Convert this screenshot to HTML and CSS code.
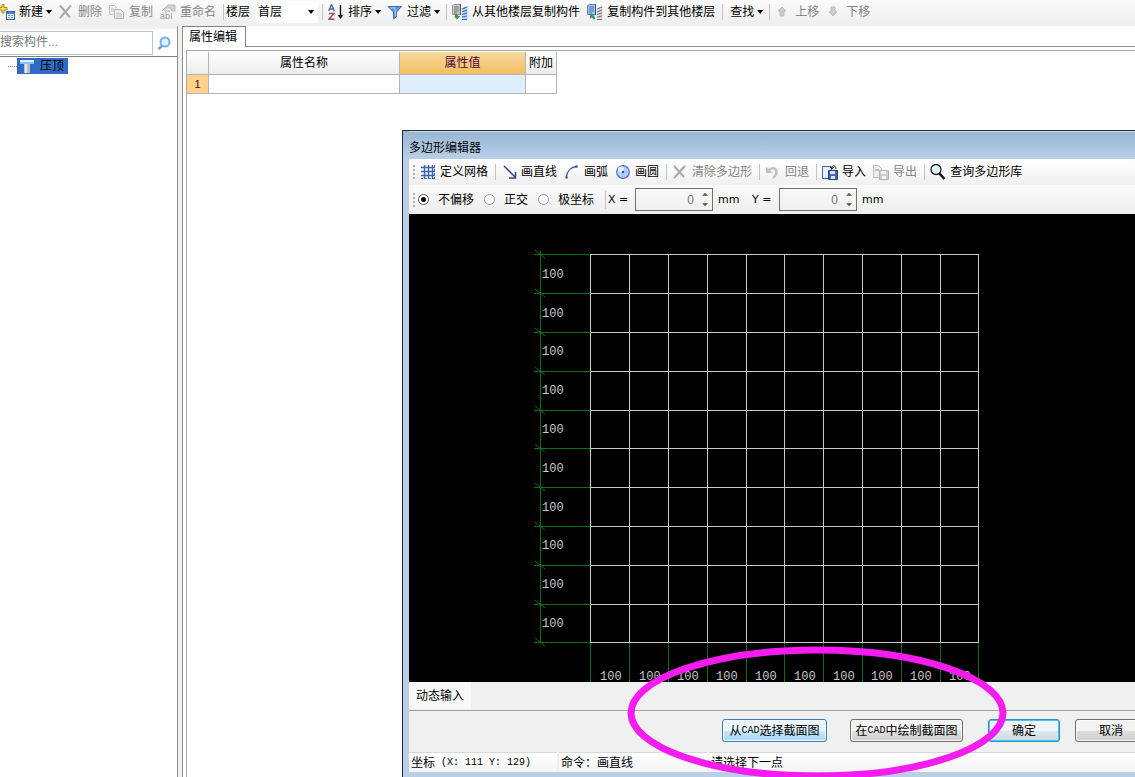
FILE: index.html
```html
<!DOCTYPE html>
<html lang="zh-CN">
<head>
<meta charset="utf-8">
<title>多边形编辑器</title>
<link rel="stylesheet" href="styles.css">
</head>
<body>
<div class="app">
  <header class="toolbar main-toolbar">
    <button class="tool new"><svg class="icon" viewBox="0 0 16 16"><rect x="7.500" y="7.500" width="8" height="8" fill="#e8f1fb" stroke="#3a62a8"/><path d="M8 8h7v2H8z" fill="#4f82cc"/><path d="M9 11.500h2m1 0h2m-5 2h2m1 0h2" stroke="#7b9ccc"/><path d="M3 .5h2v3h3v2.500H5v3H3v-3H0V3.500h3z" fill="#f8e04c" stroke="#a58b1c"/></svg>新建<i class="caret"></i></button>
    <button class="tool off"><svg class="icon" viewBox="0 0 16 16"><path d="M2 1.500l10 12M13 1.500L2 14" stroke="#aaa" stroke-width="2" fill="none"/></svg>删除</button>
    <button class="tool off"><svg class="icon" viewBox="0 0 16 16"><path d="M.5 1.500h5l3 3v6h-8z" fill="#f0f0f0" stroke="#c4c4c4"/><path d="M5.500 5.500h6l3 3v6h-9z" fill="#eee" stroke="#b4b4b4"/><path d="M7 9h5m-5 2h6m-6 2h6M2 5h3M2 7h3" stroke="#c4c4c4"/></svg>复制</button>
    <button class="tool off"><svg class="icon" viewBox="0 0 16 16"><path d="M5 4l3-3h7v6h-4V4z" fill="#d0d0d0" stroke="#bbb"/><path d="M2 7l3-3v3h5" stroke="#b0b0b0" fill="none"/><text x="0" y="15" class="rename-mark">abI</text></svg>重命名</button>
    <span class="sep"></span>
    <label class="floor-label" for="floor">楼层</label>
    <span class="select-wrap"><select id="floor"><option>首层</option></select><i class="caret"></i></span>
    <span class="sep"></span>
    <button class="tool"><svg class="icon" viewBox="0 0 16 16"><path d="M0.700 7L3.500 0.500 6.300 7M1.700 5h3.600" stroke="#4464b4" stroke-width="1.300" fill="none"/><path d="M1 9.500h5L1 15.200h5.500" stroke="#b34b52" stroke-width="1.400" fill="none"/><path d="M12.500 1v12" stroke="#111" stroke-width="1.400"/><path d="M9.800 11h5.400l-2.700 4z" fill="#111"/></svg>排序<i class="caret"></i></button>
    <button class="tool"><svg class="icon" viewBox="0 0 16 16"><path d="M1 2.500h13.500L9.500 8v4.500L6.500 15V8z" fill="#5c8fe0" stroke="#3d68b8"/><path d="M3.500 3.800h4.500l.5 4.200v4" stroke="#a4c6fa" stroke-width="1.300" fill="none"/></svg>过滤<i class="caret"></i></button>
    <span class="sep"></span>
    <button class="tool"><svg class="icon" viewBox="0 0 16 16"><path d="M.5 1.500l2-1h6v10h-8z" fill="#c8c8c8" stroke="#999"/><path d="M8.500 0v11" stroke="#555"/><path d="M2 3h5M2 5h5M2 7h5M2 9h3" stroke="#777"/><path d="M10.500 4l5-2v13h-5z" fill="#b4d0f4"/><path d="M10 5l5-2M10 8l5-2M10 10.500l5-1.500M10 13l5-1M10 15.500h5" stroke="#3f6cb4" stroke-width="1.200"/><path d="M3 10h3v2h2.500L5 15.500 2 12.500h1z" fill="#3a9b50"/></svg>从其他楼层复制构件</button>
    <button class="tool"><svg class="icon" viewBox="0 0 16 16"><path d="M.5 1.500l2-1h6v10h-8z" fill="#a8c6f0" stroke="#5880c0"/><path d="M8.500 0v11" stroke="#28508c"/><path d="M2 3h5M2 5h5M2 7h5M2 9h3" stroke="#4a70b0"/><path d="M10.500 4l5-2v13h-5z" fill="#ddd"/><path d="M10 5l5-2M10 8l5-2M10 10.500l5-1.500M10 13l5-1M10 15.500h5" stroke="#777" stroke-width="1.200"/><path d="M3 10h5l-1.500 1.500L8.500 14 7 15.500l-2.500-2L3 15z" fill="#3a9b50"/></svg>复制构件到其他楼层</button>
    <span class="sep find-sep"></span>
    <button class="tool">查找<i class="caret"></i></button>
    <span class="sep"></span>
    <button class="tool off"><svg class="icon" viewBox="0 0 16 16"><path d="M7 3l4 4H9v5H5V7H3z" fill="#ccc" stroke="#bbb"/></svg>上移</button>
    <button class="tool off"><svg class="icon" viewBox="0 0 16 16"><path d="M5 3h4v5h2l-4 4-4-4h2z" fill="#ccc" stroke="#bbb"/></svg>下移</button>
  </header>

  <div class="workspace">
    <aside class="side">
      <div class="search">
        <input type="text" placeholder="搜索构件..." aria-label="搜索构件">
        <button class="search-btn" aria-label="搜索"><svg class="icon" viewBox="0 0 16 16"><path d="M5.500 10.500L1.500 14" stroke="#6ea4dc" stroke-width="2.600"/><circle cx="8" cy="7" r="4.500" fill="#e4f4ff" stroke="#74b0ea" stroke-width="2"/></svg></button>
      </div>
      <div class="tree">
        <span class="branch"></span>
        <button class="node"><svg class="icon" viewBox="0 0 16 16"><path d="M0 2h14v4H0z" fill="#8cc0f2"/><path d="M0 2h14v2H0z" fill="#dceeff"/><path d="M4 6h6v9H4z" fill="#b9bcc0"/><path d="M5 6h2v9H5z" fill="#e8e8e8"/></svg>压顶</button>
      </div>
    </aside>
    <main class="content">
      <div class="tabs"><button class="tab">属性编辑</button></div>
      <div class="sheet">
        <table>
          <colgroup><col class="c-num"><col class="c-name"><col class="c-value"><col class="c-extra"></colgroup>
          <thead><tr><th></th><th>属性名称</th><th class="active">属性值</th><th>附加</th></tr></thead>
          <tbody><tr><td class="row-no">1</td><td></td><td class="selected"></td><td></td></tr></tbody>
        </table>
      </div>
    </main>
  </div>

  <section class="dialog" role="dialog" aria-labelledby="dlg-title">
    <h1 class="dialog-title" id="dlg-title">多边形编辑器</h1>
    <div class="dialog-body">
      <div class="toolbar dialog-toolbar">
        <span class="grip"></span>
        <button class="tool"><svg class="icon" viewBox="0 0 16 16"><path d="M4.500 1v14M8.500 1v14M12.500 1v14M1 3.500h14M1 7.500h14M1 11.500h14" stroke="#3c62b0" stroke-width="1.400"/><path d="M14.500 1v14M1 14.500h14" stroke="#3c62b0" stroke-dasharray="2 2"/></svg>定义网格</button>
        <span class="sep"></span>
        <button class="tool"><svg class="icon" viewBox="0 0 16 16"><path d="M3 2l11 11M14.500 8v6H8" stroke="#2e4a82" stroke-width="1.500" fill="none"/></svg>画直线</button>
        <button class="tool"><svg class="icon" viewBox="0 0 16 16"><path d="M2.500 13C3 7 7 3 12.500 2.500" stroke="#3c5aa0" stroke-width="1.300" fill="none"/><circle cx="2.500" cy="13.500" r="1.300" fill="#3c5aa0"/><circle cx="12.500" cy="2.500" r="1.300" fill="#3c5aa0"/></svg>画弧</button>
        <button class="tool"><svg class="icon" viewBox="0 0 16 16"><circle cx="8" cy="8" r="6.300" fill="#b0ccf8" stroke="#5070c8" stroke-width="1.200"/><circle cx="6" cy="5.500" r="3" fill="#e2eeff"/><circle cx="8" cy="8" r="1.200" fill="#2e4aa0"/></svg>画圆</button>
        <span class="sep"></span>
        <button class="tool off"><svg class="icon" viewBox="0 0 16 16"><path d="M2 2l10 11M13 2L2 14" stroke="#aaa" stroke-width="2" fill="none"/></svg>清除多边形</button>
        <span class="sep"></span>
        <button class="tool off"><svg class="icon" viewBox="0 0 16 16"><path d="M4 6c6-5 11 2 4 8" stroke="#c0c0c0" stroke-width="2.400" fill="none"/><path d="M1 3v6h7z" fill="#c0c0c0"/></svg>回退</button>
        <span class="sep"></span>
        <button class="tool"><svg class="icon" viewBox="0 0 16 16"><path d="M.5 2.500h9v12h-9z" fill="#e9f0fb" stroke="#4462a8"/><path d="M6.500 6.500h9v9h-9z" fill="#4a64b8" stroke="#283c80"/><path d="M8 7h5v3H8zM9 12h4v3H9z" fill="#dce4f8"/><path d="M14 5c0-4-4-4-4-1m-2-1l2 2 2-2" stroke="#222" fill="none"/></svg>导入</button>
        <button class="tool off"><svg class="icon" viewBox="0 0 16 16"><path d="M.5 1.500h5l3 3v9h-8z" fill="#eee" stroke="#bbb"/><path d="M6.500 6.500h9v9h-9z" fill="#ccc" stroke="#b0b0b0"/><path d="M8 7h5v3H8zM9 12h4v3H9z" fill="#f2f2f2"/><path d="M2 5h4v2H2z" fill="#bbb"/></svg>导出</button>
        <span class="sep"></span>
        <button class="tool"><svg class="icon" viewBox="0 0 16 16"><circle cx="6" cy="5.500" r="5" fill="#d8f0fa" stroke="#222" stroke-width="1.300"/><path d="M9.500 9.500l5 5.500" stroke="#111" stroke-width="2.600"/><path d="M3 6c0-2 1-3 3-3" stroke="#fff" stroke-width="1.500" fill="none"/></svg>查询多边形库</button>
      </div>

      <div class="options">
        <span class="grip"></span>
        <div class="modes">
          <label><input type="radio" name="mode" checked>不偏移</label>
          <label><input type="radio" name="mode">正交</label>
          <label><input type="radio" name="mode">极坐标</label>
        </div>
        <span class="sep"></span>
        <label class="axis" for="off-x">X =</label>
        <span class="spin"><input id="off-x" type="text" value="0"><span class="steps"><button aria-label="X 增加"><i class="up"></i></button><button aria-label="X 减少"><i class="down"></i></button></span></span>
        <span class="unit">mm</span>
        <label class="axis" for="off-y">Y =</label>
        <span class="spin"><input id="off-y" type="text" value="0"><span class="steps"><button aria-label="Y 增加"><i class="up"></i></button><button aria-label="Y 减少"><i class="down"></i></button></span></span>
        <span class="unit">mm</span>
      </div>

      <div class="canvas">
        <svg class="drawing" width="100%" height="100%">
          <g class="dim">
            <path d="M131.500 37V429M125 40.500H181M125 79.500H181M125 118.500H181M125 157.500H181M125 196.500H181M125 234.500H181M125 273.500H181M125 312.500H181M125 351.500H181M125 390.500H181M125 428.500H181"/>
            <path d="M181.500 429V468M220.500 429V468M259.500 429V468M298.500 429V468M337.500 429V468M375.500 429V468M414.500 429V468M453.500 429V468M492.500 429V468M531.500 429V468M569.500 429V468"/>
            <path class="ticks" d="M126 36l10 8M126 75l10 8M126 114l10 8M126 153l10 8M126 192l10 8M126 230l10 8M126 269l10 8M126 308l10 8M126 347l10 8M126 386l10 8M126 424l10 8"/>
          </g>
          <path class="grid" d="M181 40.500H570M181 79.500H570M181 118.500H570M181 157.500H570M181 196.500H570M181 234.500H570M181 273.500H570M181 312.500H570M181 351.500H570M181 390.500H570M181 428.500H570M181.500 40V429M220.500 40V429M259.500 40V429M298.500 40V429M337.500 40V429M375.500 40V429M414.500 40V429M453.500 40V429M492.500 40V429M531.500 40V429M569.500 40V429"/>
          <g class="nums">
            <text x="133" y="64">100</text><text x="133" y="103">100</text><text x="133" y="141">100</text><text x="133" y="180">100</text><text x="133" y="219">100</text><text x="133" y="258">100</text><text x="133" y="297">100</text><text x="133" y="335">100</text><text x="133" y="374">100</text><text x="133" y="413">100</text>
            <text x="191" y="466">100</text><text x="230" y="466">100</text><text x="268" y="466">100</text><text x="307" y="466">100</text><text x="346" y="466">100</text><text x="385" y="466">100</text><text x="424" y="466">100</text><text x="462" y="466">100</text><text x="501" y="466">100</text><text x="540" y="466">100</text>
          </g>
        </svg>
      </div>

      <div class="dynamic"><button class="dyn-btn">动态输入</button></div>
      <div class="actions">
        <button class="btn hot">从<span class="narrow">CAD</span>选择截面图</button>
        <button class="btn draw">在<span class="narrow">CAD</span>中绘制截面图</button>
        <button class="btn ok">确定</button>
        <button class="btn cancel">取消</button>
      </div>
      <footer class="status">
        <span class="cell">坐标<span class="narrow coords"> (X: 111 Y: 129)</span></span>
        <span class="cell">命令：画直线</span>
        <span class="cell last">请选择下一点</span>
      </footer>
    </div>
  </section>

  <svg class="highlight" viewBox="0 0 380 134"><ellipse cx="190" cy="67" rx="186" ry="63"/></svg>
</div>
</body>
</html>
```
FILE: styles.css
```css
* { box-sizing: border-box; }
body {
  margin: 0;
  overflow: hidden;
  color: #000;
  background: #fff;
  font: 12px/16px "Liberation Sans", "Noto Sans CJK SC", sans-serif;
}
button, input, select { font: inherit; color: inherit; margin: 0; padding: 0; border: 0; background: none; border-radius: 0; }
.app { position: relative; display: flex; flex-direction: column; height: 100vh; overflow: hidden; }
.icon { width: 16px; height: 16px; flex: none; display: block; }

.toolbar { display: flex; align-items: center; white-space: nowrap; flex: none; height: 26px; }
.main-toolbar { background: linear-gradient(#fbfbfb, #eee); padding-bottom: 2px; }
.tool { display: flex; align-items: center; gap: 4px; margin-right: 7px; flex: none; }
.tool.new { margin-left: -1px; }
.tool.off { color: #858585; }
.rename-mark { font: 9px "Liberation Sans", sans-serif; fill: #999; }
.caret { width: 6px; height: 4px; flex: none; background: #000; clip-path: polygon(0 0, 100% 0, 50% 100%); }
.tool .caret { margin: 0 -1px; }
.sep { width: 1px; height: 16px; background: #c3c3c3; margin-right: 5px; flex: none; }
.find-sep { margin-right: 7px; }
.floor-label { margin-left: -3px; margin-right: 6px; }
.select-wrap { display: flex; align-items: center; background: #fff; width: 62px; height: 22px; margin-right: 4px; padding-right: 4px; flex: none; }
.select-wrap select { appearance: none; flex: 1; min-width: 0; padding-left: 2px; }

.workspace { display: flex; flex: 1; min-height: 0; background: #f0f0f0; }
.side { width: 178px; flex: none; display: flex; flex-direction: column; border-right: 1px solid #909090; padding-top: 3px; }
.search { display: flex; align-items: center; height: 28px; background: #fff; border-bottom: 1px solid #808080; flex: none; }
.search input { width: 153px; height: 24px; padding-bottom: 2px; border: 1px solid #b5c3d3; border-left: 0; }
.search input::placeholder { color: #777; opacity: 1; }
.search-btn { margin-left: 4px; }
.tree { flex: 1; display: flex; align-items: flex-start; background: #fff; padding: 1px 0 0 8px; }
.branch { width: 9px; margin-top: 8px; border-top: 1px dotted #888; }
.node { display: flex; align-items: center; gap: 4px; height: 16px; padding: 0 4px 0 3px; background: #316ac5; }
.content { flex: 1; min-width: 0; margin-left: 4px; border-left: 1px solid #909090; background: #fff; display: flex; flex-direction: column; }
.tabs { display: flex; height: 21px; flex: none; }
.tabs::after { content: ""; flex: 1; border-bottom: 1px solid #909090; }
.tab { width: 63px; padding-right: 2px; border: solid #808080; border-width: 1px 1px 0 0; }
.sheet { margin: 3px 0 0 3px; border: solid #a8a8a8; border-width: 1px 0 0 1px; flex: 1; padding-top: 1px; }
table { border-collapse: separate; border-spacing: 0; table-layout: fixed; width: 370px; }
.c-num { width: 22px; }
.c-name { width: 191px; }
.c-value { width: 126px; }
.c-extra { width: 31px; }
th, td { padding: 0; border: solid #b4b4b4; border-width: 0 1px 1px 0; text-align: center; font-weight: normal; }
th { height: 23px; background: linear-gradient(#fff, #ededed); }
td { height: 19px; }
th.active { background: linear-gradient(#f7d9a0, #f2bf60); color: #500030; }
.row-no { background: #ffd28c; color: #500030; font-size: 11px; }
.selected { background: #dfeefd; }

.dialog { position: absolute; left: 402px; top: 130px; right: 0; bottom: 0; display: flex; flex-direction: column; padding: 0 0 5px 6px; border: solid #222c38; border-width: 1px 0 0 1px; background: linear-gradient(#98b5d3, #b9cfe8 28px); }
.dialog-title { margin: 0; height: 28px; font-size: 12px; font-weight: normal; line-height: 32px; border-top: 1px solid #c8dcf0; flex: none; }
.dialog-body { flex: 1; min-height: 0; display: flex; flex-direction: column; background: #f0f0f0; }
.dialog-toolbar { background: linear-gradient(#fff, #f0f0f0); }
.grip { width: 2px; height: 14px; margin: 0 5px 0 4px; flex: none; background: repeating-linear-gradient(#b0b0b0 0 2px, transparent 2px 4px); }
.options { display: flex; align-items: center; height: 29px; flex: none; background: linear-gradient(#fafafa, #eee); white-space: nowrap; }
.options .grip { margin-right: 3px; }
.modes { display: flex; gap: 10px; }
.modes label { display: flex; align-items: center; gap: 9px; }
.modes input { appearance: none; width: 11px; height: 11px; border: 1px solid #999; border-radius: 50%; background: #fff; }
.modes input:checked { border-color: #555; background: radial-gradient(#000 0 2px, #fff 3px); }
.options .sep { margin: 0 2px 0 11px; height: 18px; }
.axis, .unit { font: 11px/16px "DejaVu Sans", sans-serif; flex: none; }
.axis { width: 27px; }
.unit { width: 39px; padding-left: 5px; }
.spin { display: flex; width: 78px; height: 23px; border: 1px solid #707070; flex: none; }
.spin input { flex: 1; min-width: 0; text-align: right; color: #777; }
.steps { display: flex; flex-direction: column; width: 18px; padding-left: 4px; }
.steps button { flex: 1; display: flex; align-items: center; justify-content: center; }
.steps i { width: 6px; height: 3px; background: #555; }
.up { clip-path: polygon(50% 0, 100% 100%, 0 100%); }
.down { clip-path: polygon(0 0, 100% 0, 50% 100%); }

.canvas { flex: 1; min-height: 0; background: #000; }
.drawing { display: block; fill: none; overflow: visible; }
.dim { stroke: #087018; shape-rendering: crispEdges; }
.ticks { shape-rendering: auto; }
.grid { stroke: #c8c8c8; shape-rendering: crispEdges; }
.nums { fill: #c8c8c8; font: 12px "Liberation Mono", monospace; }

.dynamic { height: 29px; flex: none; border-bottom: 1px solid #a0a0a0; display: flex; }
.dyn-btn { height: 27px; padding: 0 7px; background: #f8f8f8; }
.actions { display: flex; align-items: flex-start; height: 41px; padding: 8px 0 0 313px; flex: none; overflow: hidden; }
.btn { display: flex; align-items: center; justify-content: center; flex: none; height: 23px; border: 1px solid #707070; border-radius: 3px; background: linear-gradient(#f3f3f3 50%, #dfdfdf 50%, #cfcfcf); box-shadow: inset 0 0 0 1px #f8f8f8; white-space: nowrap; }
.hot { width: 105px; border-color: #3c7fb1; background: linear-gradient(#eaf6fd 50%, #c8e8fc 50%, #a7d9f5); }
.draw { width: 113px; margin-left: 23px; }
.ok { width: 72px; margin-left: 25px; border-color: #2c90b8; background: linear-gradient(#f0f5f7 50%, #dde8ee 50%, #c8dbe4); box-shadow: inset 0 0 0 1px #48c4ee; }
.cancel { width: 72px; margin-left: 15px; }
.narrow { font: 10px/16px "Liberation Mono", monospace; }
.coords { white-space: pre; }
.status { display: flex; gap: 2px; height: 20px; flex: none; white-space: nowrap; }
.cell { width: 148px; padding: 2px; background: linear-gradient(#fff, #f4f4f4); border-top: 1px solid #d8d8d8; flex: none; display: flex; align-items: center; }
.cell.last { flex: 1; }

.highlight { position: absolute; left: 627px; top: 646px; width: 380px; height: 134px; pointer-events: none; }
.highlight ellipse { fill: none; stroke: #f51cf0; stroke-width: 7; }
```
